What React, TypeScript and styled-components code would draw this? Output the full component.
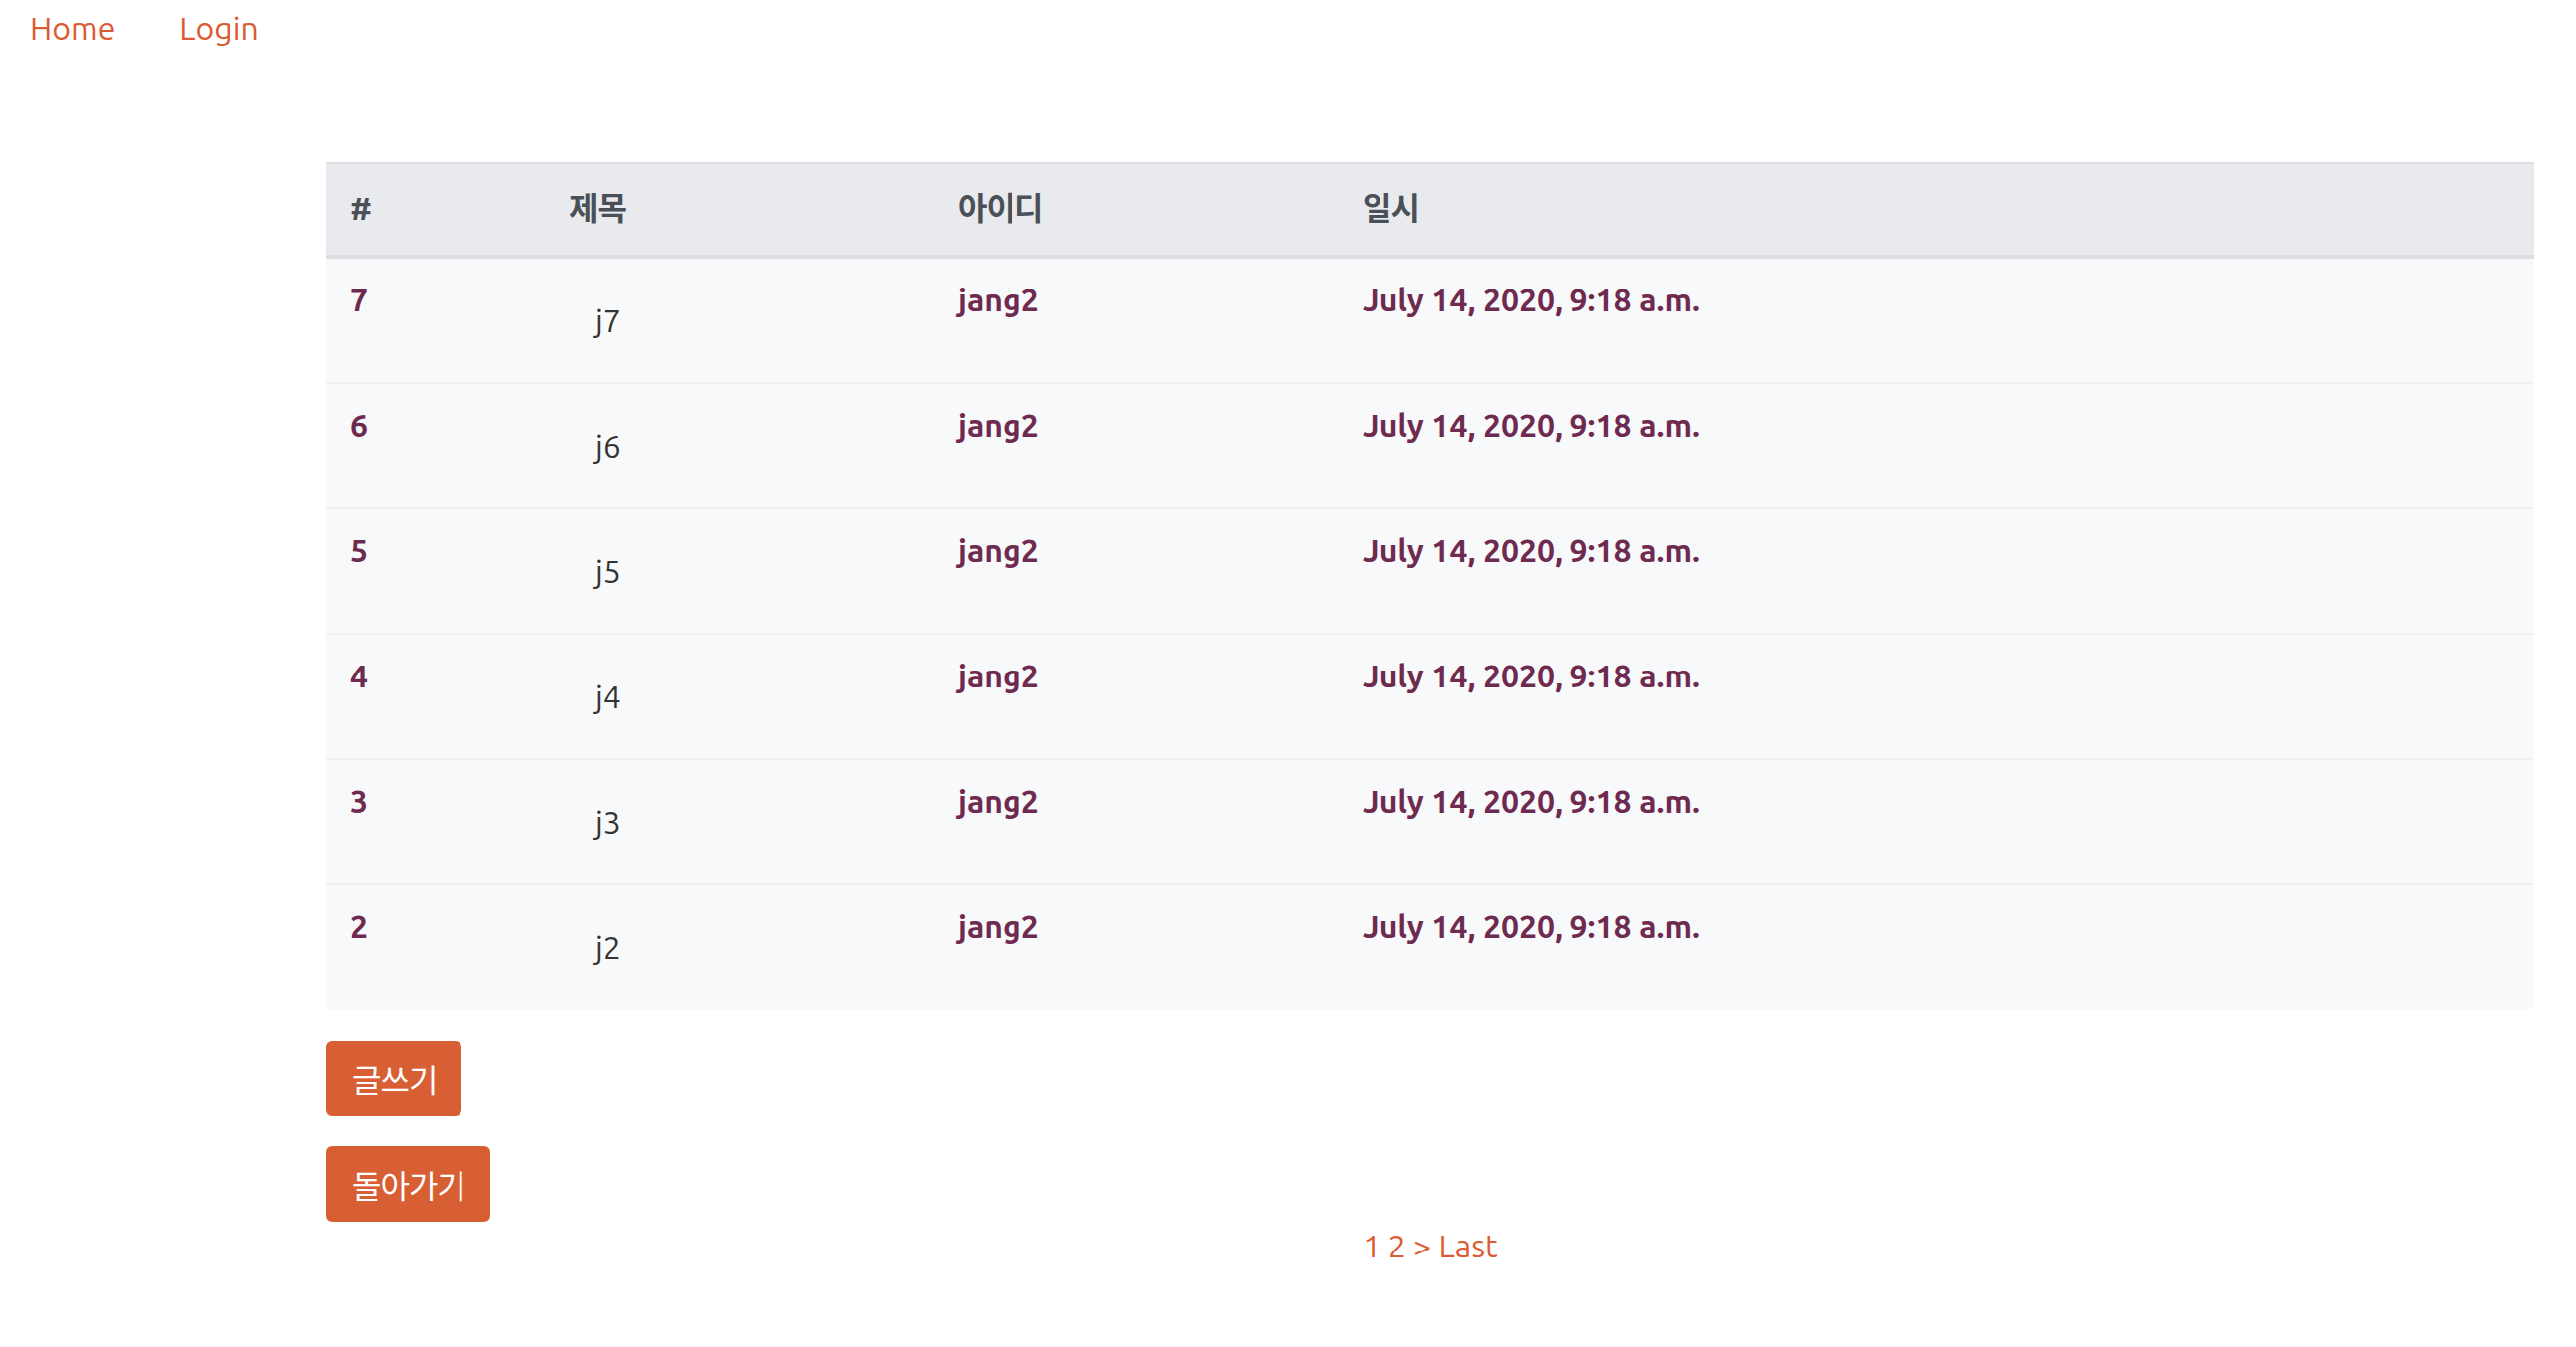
import React from "react";
import styled, { createGlobalStyle } from "styled-components";

const GlobalStyle = createGlobalStyle`
  html, body {
    margin: 0;
    padding: 0;
    background: #ffffff;
  }
  body {
    font-family: Ubuntu, "Noto Sans", "Noto Sans CJK KR", sans-serif;
    font-size: 32px;
    line-height: 48px;
    color: #333333;
  }
`;

const Nav = styled.nav`
  display: flex;
  align-items: center;
  gap: 64px;
  padding: 4px 0 0 30px;
  height: 48px;
`;

const NavLink = styled.a`
  color: #db5b32;
  text-decoration: none;
  font-size: 32px;
  line-height: 48px;
`;

const Main = styled.main`
  padding: 111px 42px 40px 328px;
  display: flex;
  flex-direction: column;
`;

const Table = styled.table`
  width: 100%;
  table-layout: fixed;
  border-collapse: separate;
  border-spacing: 0;
`;

const HeadCell = styled.th`
  background: #e9eaed;
  color: #495057;
  font-weight: 700;
  text-align: left;
  padding: 20px 24px 21px;
  border-top: 2px solid #dfe0e4;
  border-bottom: 4px solid #dcdde1;
  vertical-align: top;
`;

const Kor = styled.span`
  font-family: "Noto Sans CJK KR", sans-serif;
  letter-spacing: -1px;
  position: relative;
  top: -2px;
`;

const Row = styled.tr`
  & + & > td {
    border-top: 2px solid #eff0f2;
  }
`;

const Cell = styled.td<{ $strong?: boolean }>`
  background: #f8f9fa;
  vertical-align: top;
  padding: 17px 24px 19px;
  font-weight: ${(p) => (p.$strong ? 700 : 400)};
  color: ${(p) => (p.$strong ? "#6f2a4f" : "#333333")};
`;

const TitleCell = styled(Cell)`
  padding: 38px 24px 38px 50px;
`;

const Button = styled.button<{ $gap: number }>`
  align-self: flex-start;
  background: #d85f33;
  color: #ffffff;
  border: 2px solid #d85f33;
  border-radius: 6px;
  padding: 12px 23px 12px 24px;
  font-family: "Noto Sans CJK KR", sans-serif;
  font-size: 32px;
  line-height: 48px;
  letter-spacing: -1px;
  cursor: pointer;
  margin-top: ${(p) => p.$gap}px;
`;

const Pager = styled.div`
  text-align: center;
  color: #db5b32;
  font-size: 32px;
  line-height: 48px;
`;

const rows = [7, 6, 5, 4, 3, 2];

export default function App() {
  return (
    <>
      <GlobalStyle />
      <Nav>
        <NavLink href="#">Home</NavLink>
        <NavLink href="#">Login</NavLink>
      </Nav>
      <Main>
        <Table>
          <colgroup>
            <col style={{ width: 220 }} />
            <col style={{ width: 391 }} />
            <col style={{ width: 407 }} />
            <col />
          </colgroup>
          <thead>
            <tr>
              <HeadCell>#</HeadCell>
              <HeadCell>
                <Kor>제목</Kor>
              </HeadCell>
              <HeadCell>
                <Kor>아이디</Kor>
              </HeadCell>
              <HeadCell>
                <Kor>일시</Kor>
              </HeadCell>
            </tr>
          </thead>
          <tbody>
            {rows.map((n) => (
              <Row key={n}>
                <Cell $strong>{n}</Cell>
                <TitleCell>j{n}</TitleCell>
                <Cell $strong>jang2</Cell>
                <Cell $strong>July 14, 2020, 9:18 a.m.</Cell>
              </Row>
            ))}
          </tbody>
        </Table>
        <Button $gap={32}>글쓰기</Button>
        <Button $gap={30}>돌아가기</Button>
        <Pager>1 2 &gt; Last</Pager>
      </Main>
    </>
  );
}
